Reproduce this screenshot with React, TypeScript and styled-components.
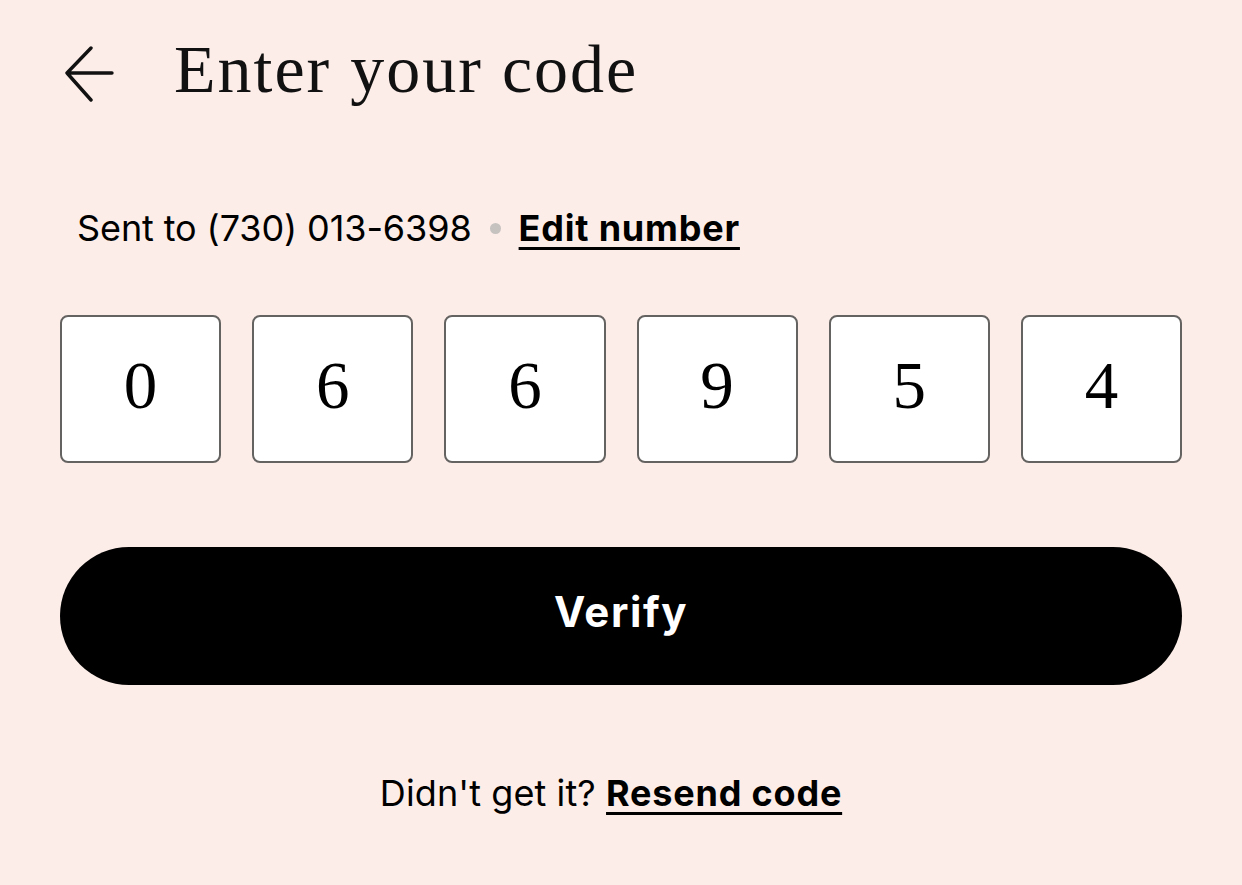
import styled, { createGlobalStyle } from 'styled-components';

const GlobalStyle = createGlobalStyle`
  html, body {
    margin: 0;
    padding: 0;
    background: #fcede8;
  }
  * {
    box-sizing: border-box;
  }
`;

const code = ['0', '6', '6', '9', '5', '4'];

const BackArrow = () => (
  <svg width="52" height="58" viewBox="0 0 52 58" fill="none">
    <path
      d="M4 27 H49 M28 2 L4 27 L28 54"
      stroke="#111"
      strokeWidth="3.4"
      strokeLinecap="round"
      strokeLinejoin="round"
    />
  </svg>
);

const App = () => {
  return (
    <>
      <GlobalStyle />
      <Page>
        <Header>
          <BackButton aria-label="Back">
            <BackArrow />
          </BackButton>
          <Title>Enter your code</Title>
        </Header>

        <SentLine>
          <span>Sent to (730) 013-6398</span>
          <Dot />
          <TextLink>Edit number</TextLink>
        </SentLine>

        <CodeRow>
          {code.map((digit, i) => (
            <DigitBox key={i}>{digit}</DigitBox>
          ))}
        </CodeRow>

        <VerifyButton>Verify</VerifyButton>

        <ResendLine>
          Didn't get it? <TextLink>Resend code</TextLink>
        </ResendLine>
      </Page>
    </>
  );
};

const Page = styled.div`
  width: 1242px;
  min-height: 885px;
  padding: 32px 60px 0;
  background: #fcede8;
  color: #000;
  font-family: Inter, 'Liberation Sans', sans-serif;
`;

const Header = styled.div`
  display: flex;
  align-items: flex-start;
  gap: 59px;
`;

const BackButton = styled.button`
  display: flex;
  margin-top: 14px;
  margin-left: 3px;
  padding: 0;
  border: none;
  background: none;
  cursor: pointer;
`;

const Title = styled.h1`
  margin: 0;
  font-family: 'Liberation Serif', serif;
  font-weight: 400;
  font-size: 68px;
  line-height: 74px;
  letter-spacing: 2px;
  color: #111;
`;

const SentLine = styled.div`
  display: flex;
  align-items: center;
  margin-top: 100px;
  padding-left: 17px;
  font-size: 36px;
  line-height: 44px;
  letter-spacing: -0.1px;
`;

const Dot = styled.span`
  width: 11px;
  height: 11px;
  margin: 0 18px 0 18px;
  border-radius: 50%;
  background: #c6c2c0;
`;

const TextLink = styled.a`
  font-weight: 700;
  letter-spacing: 0.8px;
  text-decoration: underline;
  text-decoration-thickness: 3px;
  text-underline-offset: 6px;
  color: #000;
  cursor: pointer;
`;

const CodeRow = styled.div`
  display: flex;
  gap: 31px;
  margin-top: 65px;
`;

const DigitBox = styled.div`
  flex: 1;
  height: 148px;
  display: flex;
  align-items: center;
  justify-content: center;
  padding-bottom: 8px;
  background: #fff;
  border: 2.5px solid #656361;
  border-radius: 8px;
  font-family: 'Liberation Serif', serif;
  font-size: 67px;
  color: #000;
`;

const VerifyButton = styled.button`
  display: block;
  width: 100%;
  height: 138px;
  margin-top: 84px;
  padding: 0 0 10px;
  border: none;
  border-radius: 69px;
  background: #000;
  color: #fff;
  font-family: Inter, 'Liberation Sans', sans-serif;
  font-size: 42px;
  font-weight: 700;
  letter-spacing: 1.6px;
  cursor: pointer;
`;

const ResendLine = styled.div`
  margin-top: 86px;
  padding-right: 20px;
  text-align: center;
  font-size: 36px;
  line-height: 44px;
  letter-spacing: 0.1px;
`;

export default App;
